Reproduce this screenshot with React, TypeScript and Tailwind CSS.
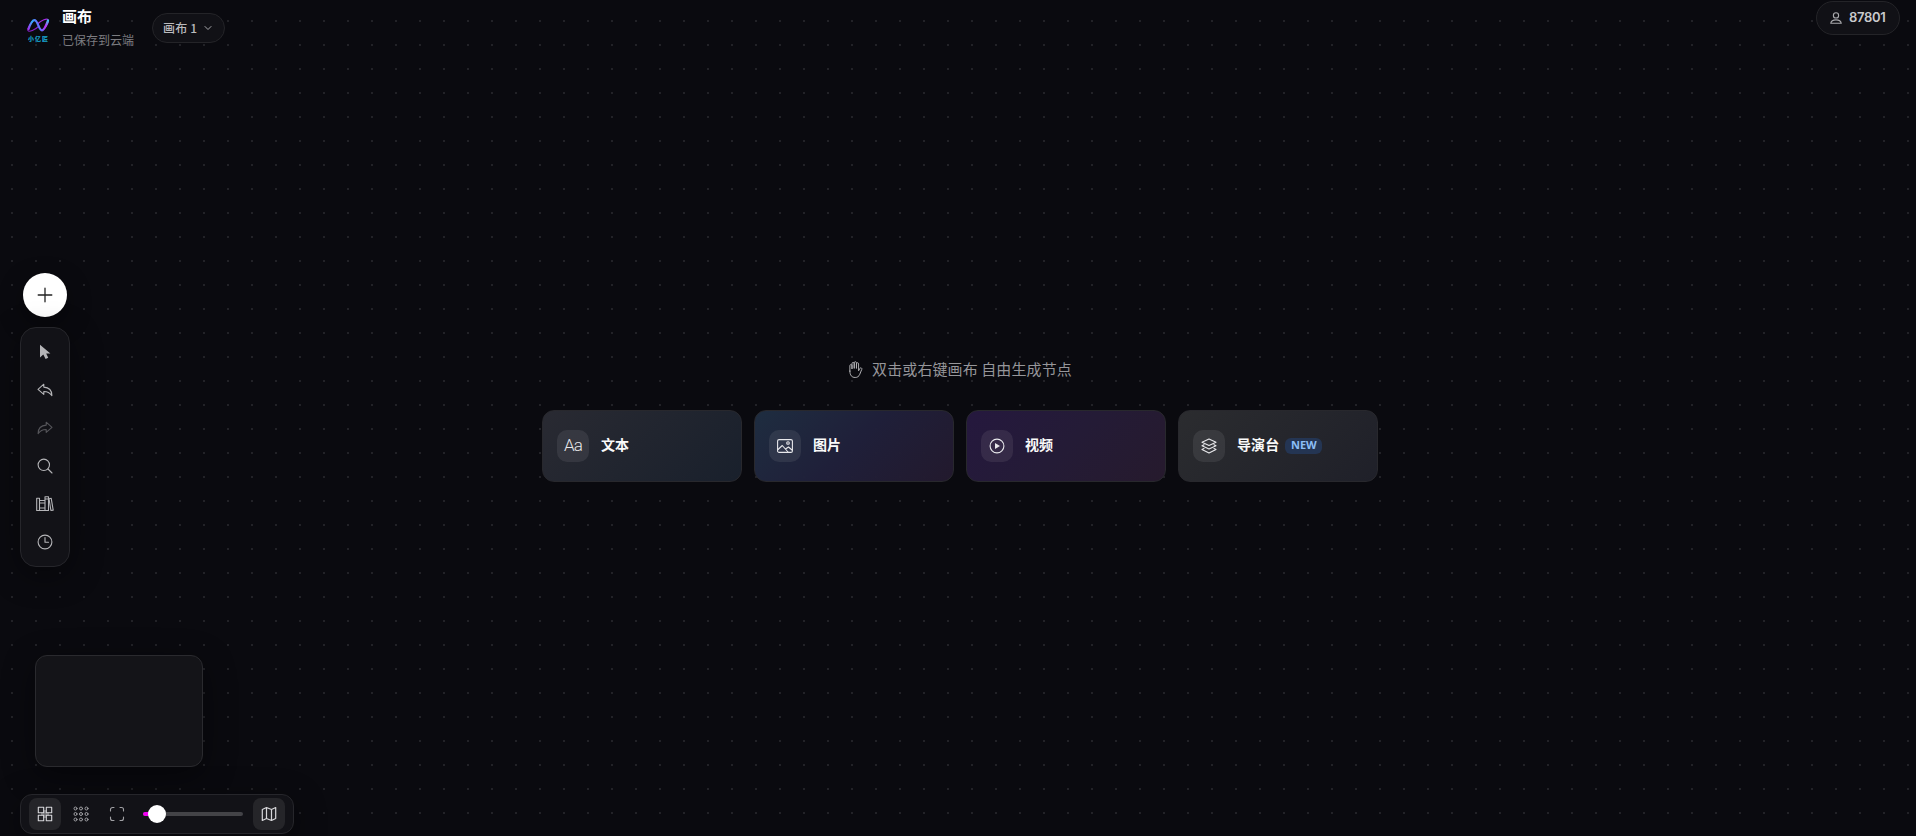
import React, { useState } from 'react';
import { ChevronDown } from 'lucide-react';

type IconProps = { className?: string; children: React.ReactNode; size?: number; strokeWidth?: number };

const Icon = ({ className = '', children, size = 16, strokeWidth = 1.1 }: IconProps) => (
  <svg
    width={size}
    height={size}
    viewBox="0 0 16 16"
    fill="none"
    stroke="currentColor"
    strokeWidth={strokeWidth}
    strokeLinecap="round"
    strokeLinejoin="round"
    className={`shrink-0 ${className}`}
  >
    {children}
  </svg>
);

const Logo = () => (
  <div className="flex w-6 flex-col items-center pt-[17px]">
    <svg width="24" height="16" viewBox="0 0 24 16" fill="none" strokeLinecap="round">
      <defs>
        <linearGradient id="wave" x1="2" y1="12" x2="22" y2="4" gradientUnits="userSpaceOnUse">
          <stop stopColor="#a52df0" />
          <stop offset="0.3" stopColor="#2fb0ff" />
          <stop offset="0.55" stopColor="#6a6cff" />
          <stop offset="0.8" stopColor="#c52cf5" />
          <stop offset="1" stopColor="#3fc6f0" />
        </linearGradient>
      </defs>
      <path d="M13 9C9 13 3 15.500 1.900 13.500C1.200 12 3.500 8 6 5.500" stroke="#8a22cc" strokeWidth="1.1" />
      <path d="M11.500 7C15.500 3 21 1 22.200 2.800C23.200 4.800 20.500 9.500 18 12" stroke="#a32be0" strokeWidth="1.1" />
      <path d="M2.500 12C4.500 6.500 6 3.200 8.500 3.200C11.800 3.200 12.800 13.300 16 13.300C18.500 13.300 20 8 22 3.500" stroke="url(#wave)" strokeWidth="2.2" />
    </svg>
    <span className="mt-[2px] ml-px whitespace-nowrap text-[6px] leading-[8px] font-black tracking-[1px] text-[#17a3cf]">小亿匠</span>
  </div>
);

const tools = [
  {
    id: 'select',
    color: 'text-[#b5b5b8]',
    icon: <path d="M3 .8V13.500L6.300 10.600L8.600 15L11.200 13.800L9.200 9.600H13.400Z" fill="currentColor" stroke="none" />,
  },
  {
    id: 'undo',
    color: 'text-[#b5b5b8]',
    icon: <path d="M6.800 2.200L1 7.300L6.800 12.300V9.500C10.500 9.400 12.800 10.800 14.900 13.600C14.900 8.800 12 5.400 6.800 5.100Z" />,
  },
  {
    id: 'redo',
    color: 'text-[#55555a]',
    icon: <path d="M9.200 2.200L15 7.300L9.200 12.300V9.500C5.500 9.400 3.200 10.800 1.100 13.600C1.100 8.800 4 5.400 9.200 5.100Z" />,
  },
  {
    id: 'search',
    color: 'text-[#b5b5b8]',
    icon: (
      <>
        <circle cx="6.800" cy="6.800" r="5.700" />
        <path d="M11 11L15 15" />
      </>
    ),
  },
  {
    id: 'library',
    color: 'text-[#b5b5b8]',
    icon: (
      <>
        <path d="M-.3 2.300H2.500V14.500H-.3ZM2.500 4.500H8V14.500H2.500ZM8 .8H11.500V14.500H8ZM2.500 7H8M2.500 12H8M8 3H11.500" />
        <path d="M12 2.700L14.200 2.300L16.200 14.100L13.900 14.500Z" />
      </>
    ),
  },
  {
    id: 'history',
    color: 'text-[#b5b5b8]',
    icon: (
      <>
        <circle cx="8" cy="8" r="6.900" />
        <path d="M8 3.500V8.300H11.500" />
      </>
    ),
  },
];

const cards = [
  {
    id: 'text',
    label: '文本',
    bg: 'from-[#2a2b33] to-[#1a212d]',
    icon: <span className="font-[Roboto] text-[17px] font-light leading-none tracking-[-0.8px]">Aa</span>,
  },
  {
    id: 'image',
    label: '图片',
    bg: 'from-[#1f2e41] via-[#20203a] to-[#231a2e]',
    icon: (
      <Icon>
        <rect x=".6" y="1.600" width="14.800" height="12.800" rx="1.500" />
        <circle cx="11" cy="5" r="1.300" />
        <path d="M1 11.500L5.300 7.500L11 14M8.500 11L11.500 9L15 12" />
      </Icon>
    ),
  },
  {
    id: 'video',
    label: '视频',
    bg: 'from-[#26193f] via-[#251c37] to-[#271b2e]',
    icon: (
      <Icon>
        <circle cx="8" cy="8" r="6.900" />
        <path d="M6 5L11 8L6 11Z" fill="currentColor" stroke="none" />
      </Icon>
    ),
  },
  {
    id: 'director',
    label: '导演台',
    isNew: true,
    bg: 'from-[#2c2d30] to-[#20212a]',
    icon: (
      <Icon>
        <path d="M8 1L15 4.200L8 7.400L1 4.200Z" />
        <path d="M3 6.700L1 7.800L8 11L15 7.800L13 6.700" />
        <path d="M3 10.600L1 11.600L8 14.900L15 11.600L13 10.600" />
      </Icon>
    ),
  },
];

const Header = () => (
  <header className="flex items-start justify-between self-start pl-[26px] pr-4 [grid-area:1/1]">
    <div className="flex items-start">
      <Logo />
      <div className="ml-3 flex flex-col pt-[6px]">
        <h1 className="text-[15px] leading-5 font-bold text-white">画布</h1>
        <p className="mt-[6px] text-xs leading-4 text-[#7c7c80]">已保存到云端</p>
      </div>
      <button className="mt-[13px] ml-[18px] flex h-[30px] w-[73px] items-center rounded-full border border-[#242428] bg-[#111116] pl-[10px] text-xs font-medium text-[#bababd]">
        <span className="-mt-px tracking-[0.2px]">画布 1</span>
        <ChevronDown size={12} strokeWidth={2} className="ml-[5px] text-[#a9a9ad]" />
      </button>
    </div>
    <button className="mt-px flex h-[34px] w-[84px] items-center rounded-full border border-[#242428] bg-[#111116] pl-[13px] text-[13px] font-semibold text-[#c9c9cc]">
      <Icon size={12} strokeWidth={1.5} className="mr-[7px] text-[#a9a9ad]">
        <circle cx="8" cy="4.500" r="3.500" />
        <path d="M1 15C1.500 11.700 4 10.500 8 10.500C12 10.500 14.500 11.700 15 15Z" />
      </Icon>
      <span className="font-[Inter] tracking-[-0.3px]">87801</span>
    </button>
  </header>
);

const Sidebar = () => (
  <aside className="mt-1 ml-5 flex w-[50px] flex-col items-center gap-[10px] self-center justify-self-start [grid-area:1/1]">
    <button className="flex size-11 items-center justify-center rounded-full bg-white text-[#222] shadow-[0_8px_24px_rgba(0,0,0,0.35)]">
      <Icon strokeWidth={1.300}>
        <path d="M8 1.200V14.800M1.200 8H14.800" />
      </Icon>
    </button>
    <div className="flex w-[50px] flex-col gap-0.5 rounded-2xl border border-[#26262b] bg-[#121217] p-1.5 shadow-[0_8px_32px_rgba(0,0,0,0.4)]">
      {tools.map((tool) => (
        <button key={tool.id} className={`flex size-9 items-center justify-center ${tool.color}`}>
          <Icon className="overflow-visible">{tool.icon}</Icon>
        </button>
      ))}
    </div>
  </aside>
);

const EmptyState = () => (
  <main className="mt-[3px] ml-1 flex flex-col items-center self-center justify-self-center [grid-area:1/1]">
    <div className="flex h-6 items-center gap-2 text-[15px] text-[#96969a]">
      <Icon size={17} strokeWidth={0.9} className="-ml-px text-[#b5b5b8]">
        <path d="M2.700 9.500V4.400C2.700 3 4.700 3 4.700 4.400V7.500V2.400C4.700 1 6.800 1 6.800 2.400V7V1.700C6.800.3 8.900.3 8.900 1.700V7V2.600C8.900 1.300 10.900 1.300 10.900 2.600V9.200L12.100 7C12.800 5.900 14.400 6.600 13.900 7.900L12 12.500C11.200 14.600 9.800 15.500 7.700 15.500C4.500 15.500 2.700 13.500 2.700 9.500Z" />
      </Icon>
      <span className="-mt-px tracking-[0.1px]">双击或右键画布 自由生成节点</span>
    </div>
    <div className="mt-7 flex gap-3">
      {cards.map((card) => (
        <button
          key={card.id}
          className={`flex h-[72px] w-[200px] items-center rounded-xl border border-[#29292e] bg-linear-135 pl-[14px] opacity-[0.98] ${card.bg}`}
        >
          <span className="flex size-8 items-center justify-center rounded-[10px] bg-white/8 text-[#ededf0]">{card.icon}</span>
          <span className="-mt-[3px] ml-3 text-sm leading-5 font-bold tracking-[0.1px] text-white">{card.label}</span>
          {card.isNew && (
            <span className="ml-1.5 flex h-4 w-[37px] items-center justify-center rounded-md bg-[#253655] pb-px font-['Open_Sans'] text-[11px] font-bold text-[#8fc2fb]">
              NEW
            </span>
          )}
        </button>
      ))}
    </div>
  </main>
);

const BottomBar = () => {
  const [zoom, setZoom] = useState(14);

  return (
    <div className="mb-0.5 ml-5 flex flex-col items-start gap-[27px] self-end justify-self-start [grid-area:1/1]">
      {/* Minimap */}
      <div className="ml-[15px] h-[112px] w-[168px] rounded-xl border border-[#2a2a2e] bg-[#141418] shadow-[0_8px_32px_rgba(0,0,0,0.4)]" />

      <div className="flex h-10 w-[274px] items-center gap-1 rounded-xl border border-[#26262b] bg-[#121217] px-2 text-[#d8d8db] shadow-[0_8px_32px_rgba(0,0,0,0.4)]">
        <button className="flex size-8 items-center justify-center rounded-lg bg-[#252529]">
          <Icon strokeWidth={1.1}>
            <path d="M6.500 4H9.500V6.500H12V9.500H9.500V12H6.500V9.500H4V6.500H6.500Z" fill="currentColor" stroke="none" opacity="0.4" />
            <path d="M1.300 1.300H6.700V6.700H1.300ZM9.300 1.300H14.700V6.700H9.300ZM1.300 9.300H6.700V14.700H1.300ZM9.300 9.300H14.700V14.700H9.300Z" />
          </Icon>
        </button>
        <button className="flex size-8 items-center justify-center text-[#a0a0a4]">
          <Icon strokeWidth={1}>
            {[2.5, 8, 13.5].map((y) => [2.5, 8, 13.5].map((x) => <circle key={`${x}-${y}`} cx={x} cy={y} r="1.5" />))}
          </Icon>
        </button>
        <button className="flex size-8 items-center justify-center text-[#a0a0a4]">
          <Icon>
            <path d="M1.500 5V3.500A2 2 0 0 1 3.500 1.500H5M11 1.500H12.500A2 2 0 0 1 14.500 3.500V5M14.500 11V12.500A2 2 0 0 1 12.500 14.500H11M5 14.500H3.500A2 2 0 0 1 1.500 12.500V11" />
          </Icon>
        </button>
        <div className="relative mx-1.5 flex h-[18px] w-[100px] items-center">
          <div className="h-1 w-full overflow-hidden rounded-full bg-[#434347]">
            <div className="h-full bg-[#f000f0]" style={{ width: `${zoom}%` }} />
          </div>
          <div className="absolute size-[18px] -translate-x-1/2 rounded-full bg-white" style={{ left: `${zoom}%` }} />
          <input
            type="range"
            value={zoom}
            onChange={(e) => setZoom(Number(e.target.value))}
            className="absolute inset-0 w-full cursor-pointer opacity-0"
          />
        </div>
        <button className="flex size-8 items-center justify-center rounded-lg bg-[#252529]">
          <Icon strokeWidth={1.200}>
            <path d="M1.300 3.500L5.500 1.500L10.500 3.500L14.700 1.500V12.500L10.500 14.500L5.500 12.500L1.300 14.500ZM5.500 1.500V12.500M10.500 3.500V14.500" />
          </Icon>
        </button>
      </div>
    </div>
  );
};

const App = () => (
  <div className="grid h-screen w-full grid-cols-1 grid-rows-1 overflow-hidden bg-[#0a0a0f] bg-[conic-gradient(from_90deg_at_calc(100%_-_2px)_calc(100%_-_2px),#222227_90deg,transparent_0)] bg-[length:24px_24px] bg-[position:-11px_-2px] font-['Noto_Sans_CJK_SC',sans-serif]">
    <Header />
    <Sidebar />
    <EmptyState />
    <BottomBar />
  </div>
);

export default App;
